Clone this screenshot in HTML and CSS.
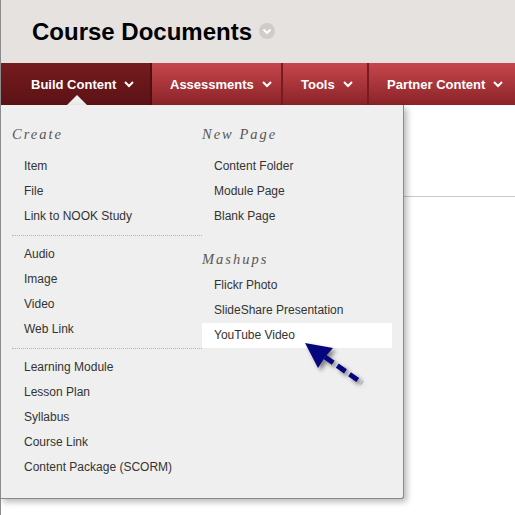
FILE: index.html
```html
<!DOCTYPE html>
<html>
<head>
<meta charset="utf-8">
<link rel="stylesheet" href="styles.css">
</head>
<body>
<div class="page">
  <header class="page-header">
    <h1 class="title">Course Documents</h1>
    <span class="title-toggle">
      <svg width="16" height="16" viewBox="0 0 16 16"><circle cx="8" cy="8" r="8" fill="#cfcdcb"/><path d="M4.5 6.5 L8 10 L11.5 6.5" fill="none" stroke="#fff" stroke-width="2"/></svg>
    </span>
  </header>
  <nav class="tabs">
    <div class="tab tab-active">Build Content <svg class="chev" width="10" height="7" viewBox="0 0 10 7"><path d="M1 1 L5 5 L9 1" fill="none" stroke="#fff" stroke-width="2"/></svg></div>
    <div class="tab tab-assess">Assessments <svg class="chev" width="10" height="7" viewBox="0 0 10 7"><path d="M1 1 L5 5 L9 1" fill="none" stroke="#fff" stroke-width="2"/></svg></div>
    <div class="tab tab-tools">Tools <svg class="chev" width="10" height="7" viewBox="0 0 10 7"><path d="M1 1 L5 5 L9 1" fill="none" stroke="#fff" stroke-width="2"/></svg></div>
    <div class="tab tab-last">Partner Content <svg class="chev" width="10" height="7" viewBox="0 0 10 7"><path d="M1 1 L5 5 L9 1" fill="none" stroke="#fff" stroke-width="2"/></svg></div>
  </nav>
  <div class="content">
    <div class="content-rule"></div>
  </div>

  <div class="notch"></div>
  <div class="menu">
    <div class="menu-col">
      <div class="menu-head">Create</div>
      <div class="menu-item">Item</div>
      <div class="menu-item">File</div>
      <div class="menu-item">Link to NOOK Study</div>
      <div class="menu-sep"></div>
      <div class="menu-item">Audio</div>
      <div class="menu-item">Image</div>
      <div class="menu-item">Video</div>
      <div class="menu-item">Web Link</div>
      <div class="menu-sep"></div>
      <div class="menu-item">Learning Module</div>
      <div class="menu-item">Lesson Plan</div>
      <div class="menu-item">Syllabus</div>
      <div class="menu-item">Course Link</div>
      <div class="menu-item">Content Package (SCORM)</div>
    </div>
    <div class="menu-col">
      <div class="menu-head">New Page</div>
      <div class="menu-item">Content Folder</div>
      <div class="menu-item">Module Page</div>
      <div class="menu-item">Blank Page</div>
      <div class="menu-head menu-head-second">Mashups</div>
      <div class="menu-item">Flickr Photo</div>
      <div class="menu-item">SlideShare Presentation</div>
      <div class="menu-item menu-item-hover">YouTube Video</div>
    </div>
  </div>

  <svg class="pointer" width="90" height="70" viewBox="0 0 90 70">
    <line x1="35" y1="27" x2="72" y2="53" stroke="#06067e" stroke-width="5" stroke-dasharray="10 5"/>
    <polygon points="15,13 43,18 35,27 28,38" fill="#06067e"/>
  </svg>
</div>
</body>
</html>
```
FILE: styles.css
```css
html, body {
  margin: 0;
  padding: 0;
  background: #fff;
}
body {
  font-family: "Liberation Sans", Arial, sans-serif;
}
.page {
  position: relative;
  width: 514px;
  height: 515px;
  border-left: 1px solid #8c8c8c;
  overflow: hidden;
}
.page-header {
  height: 63px;
  box-sizing: border-box;
  padding: 18px 0 0 31px;
  background: #e5e2df;
  display: flex;
  align-items: flex-start;
}
.title {
  margin: 0;
  font-size: 24px;
  line-height: 28px;
  font-weight: bold;
  color: #000;
}
.title-toggle {
  display: block;
  margin: 5px 0 0 7px;
  height: 16px;
}
.title-toggle svg { display: block; }

.tabs {
  display: flex;
  height: 42px;
  background: #7b1d21;
}
.tab {
  box-sizing: border-box;
  display: flex;
  align-items: center;
  gap: 8px;
  padding-left: 18px;
  white-space: nowrap;
  color: #fff;
  font-weight: bold;
  font-size: 13px;
  background: linear-gradient(#c6474d, #8a2328);
  border-right: 2px solid #761b1f;
}
.tab-active {
  width: 151px;
  padding-left: 30px;
  background: linear-gradient(#761b1f, #5c1215);
  border-right: 2px solid #4e1013;
}
.tab-assess { width: 131px; }
.tab-tools { width: 86px; }
.tab-last {
  flex: 1;
  border-right: 0;
}
.chev { display: block; margin-top: 1px; }

.content {
  padding-top: 91px;
}
.content-rule {
  margin-left: 403px;
  height: 1px;
  background: #c8c8c8;
}

.notch {
  position: absolute;
  left: 66px;
  top: 95px;
  width: 0;
  height: 0;
  border-left: 10px solid transparent;
  border-right: 10px solid transparent;
  border-bottom: 10px solid #efefef;
}
.menu {
  position: absolute;
  left: -1px;
  top: 105px;
  width: 404px;
  height: 394px;
  box-sizing: border-box;
  padding: 19px 0 0 12px;
  background: #efefef;
  border-right: 1px solid #8a8a8a;
  border-bottom: 1px solid #8a8a8a;
  border-bottom-right-radius: 3px;
  box-shadow: 3px 3px 6px rgba(0, 0, 0, 0.28);
  display: flex;
}
.menu-col {
  width: 190px;
  display: flex;
  flex-direction: column;
}
.menu-head {
  height: 20px;
  line-height: 20px;
  margin-bottom: 10px;
  font-family: "Liberation Serif", "Times New Roman", serif;
  font-style: italic;
  font-size: 14.5px;
  letter-spacing: 2px;
  color: #5a5654;
}
.menu-head-second {
  margin-top: 20px;
  margin-bottom: 4px;
}
.menu-item {
  height: 25px;
  line-height: 25px;
  padding-left: 12px;
  font-size: 12px;
  color: #333;
}
.menu-item-hover {
  background: #fff;
}
.menu-sep {
  margin: 6px 0;
  border-top: 1px dotted #b4b4b4;
}

.pointer {
  position: absolute;
  left: 289px;
  top: 330px;
  filter: drop-shadow(3px 3px 2px rgba(0, 0, 0, 0.45));
}
```
